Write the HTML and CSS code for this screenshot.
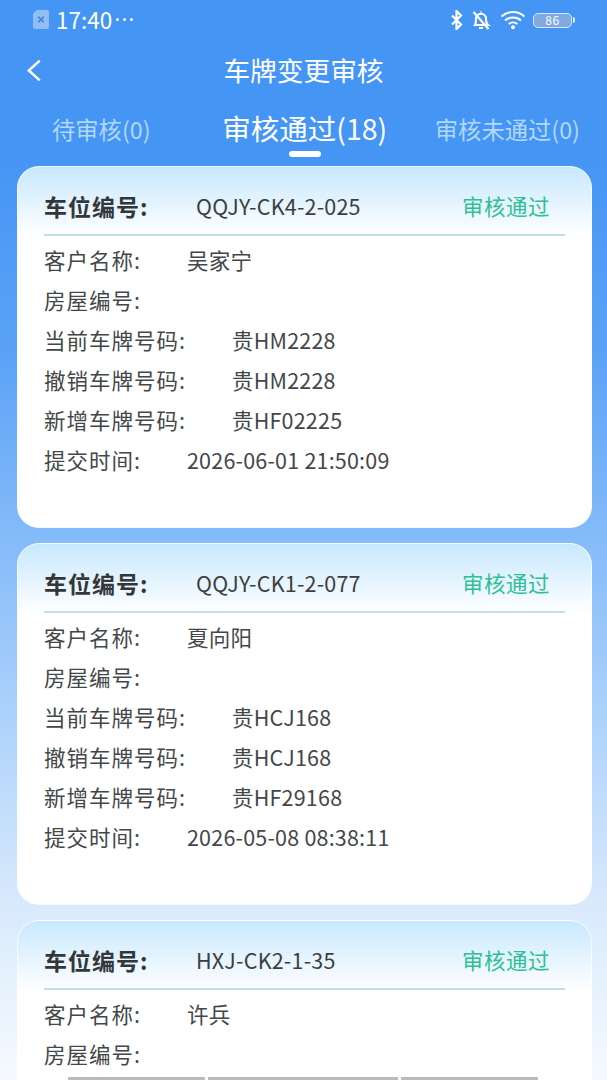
FILE: index.html
```html
<!DOCTYPE html>
<html lang="zh-CN">
<head>
<meta charset="utf-8">
<title>车牌变更审核</title>
<link rel="stylesheet" href="styles.css">
</head>
<body>
<div class="screen">
  <div class="status">
    <div class="status-left">
      <svg class="sim" viewBox="0 0 17 20"><path d="M4 0h11a2 2 0 0 1 2 2v16a2 2 0 0 1-2 2H2a2 2 0 0 1-2-2V4z" fill="#8fbff6"/><path d="M5.500 7l6 6M11.500 7l-6 6" stroke="#4a86d8" stroke-width="1.800" fill="none"/></svg>
      <span class="clock">17:40</span>
      <span class="dots"><i></i><i></i><i></i></span>
    </div>
    <div class="status-right">
      <svg class="ic-bt" viewBox="0 0 14 20"><path d="M2 5.500l9 9-4.500 4.500V1l4.500 4.500-9 9" fill="none" stroke="#fff" stroke-width="2.200"/></svg>
      <svg class="ic-bell" viewBox="0 0 20 20"><path d="M4 15c1-1.500 1-3.500 1-6 0-3 2.200-5.200 5-5.200s5 2.200 5 5.200c0 2.500 0 4.500 2 6zM8 18h4M9.500 2h1" fill="none" stroke="#fff" stroke-width="2.100"/><path d="M2.500 2l15 17" stroke="#fff" stroke-width="2.100"/></svg>
      <svg class="ic-wifi" viewBox="0 0 26 20"><path d="M1.500 6.500c6.500-6 16.500-6 23 0M5 10.500c4.500-4 11.500-4 16 0M8.700 14c2.500-2 6.100-2 8.600 0" fill="none" stroke="#fff" stroke-width="2"/><circle cx="13" cy="17.200" r="2" fill="#fff"/></svg>
      <div class="battery"><span class="battery-body">86</span><span class="battery-tip"></span></div>
    </div>
  </div>

  <div class="nav">
    <svg class="back" viewBox="0 0 16 24"><path d="M13.500 2.500L3 12l10.500 9.500" fill="none" stroke="#fff" stroke-width="2.400"/></svg>
    <h1 class="title">车牌变更审核</h1>
  </div>

  <div class="tabs">
    <div class="tab">待审核(0)</div>
    <div class="tab tab-active">审核通过(18)<span class="tab-bar"></span></div>
    <div class="tab">审核未通过(0)</div>
  </div>

  <div class="list">
    <section class="card">
      <header class="card-head">
        <span class="code-label">车位编号:</span>
        <span class="code-value">QQJY-CK4-2-025</span>
        <span class="state">审核通过</span>
      </header>
      <div class="rows">
        <div class="row"><span class="key">客户名称:</span><span>吴家宁</span></div>
        <div class="row"><span class="key">房屋编号:</span></div>
        <div class="row"><span class="key">当前车牌号码:</span><span>贵HM2228</span></div>
        <div class="row"><span class="key">撤销车牌号码:</span><span>贵HM2228</span></div>
        <div class="row"><span class="key">新增车牌号码:</span><span>贵HF02225</span></div>
        <div class="row"><span class="key">提交时间:</span><span>2026-06-01 21:50:09</span></div>
      </div>
    </section>
    <section class="card">
      <header class="card-head">
        <span class="code-label">车位编号:</span>
        <span class="code-value">QQJY-CK1-2-077</span>
        <span class="state">审核通过</span>
      </header>
      <div class="rows">
        <div class="row"><span class="key">客户名称:</span><span>夏向阳</span></div>
        <div class="row"><span class="key">房屋编号:</span></div>
        <div class="row"><span class="key">当前车牌号码:</span><span>贵HCJ168</span></div>
        <div class="row"><span class="key">撤销车牌号码:</span><span>贵HCJ168</span></div>
        <div class="row"><span class="key">新增车牌号码:</span><span>贵HF29168</span></div>
        <div class="row"><span class="key">提交时间:</span><span>2026-05-08 08:38:11</span></div>
      </div>
    </section>
    <section class="card">
      <header class="card-head">
        <span class="code-label">车位编号:</span>
        <span class="code-value">HXJ-CK2-1-35</span>
        <span class="state">审核通过</span>
      </header>
      <div class="rows">
        <div class="row"><span class="key">客户名称:</span><span>许兵</span></div>
        <div class="row"><span class="key">房屋编号:</span></div>
      </div>
    </section>
  </div>

  <div class="gesture"><span class="seg-a"></span><span class="seg-b"></span><span class="seg-a"></span></div>
</div>
</body>
</html>
```

FILE: styles.css
```css
* { box-sizing: border-box; margin: 0; padding: 0; }
html, body { width: 607px; height: 1080px; overflow: hidden; }
body {
  font-family: "Noto Sans CJK SC", "Noto Sans", sans-serif;
  color: #44474a;
}
.screen {
  position: relative;
  width: 607px;
  height: 1080px;
  overflow: hidden;
  background: linear-gradient(180deg, #4595f5 0, #4595f5 150px, #5aa2f7 350px, #7cb6f9 500px, #a8d0fb 700px, #d8e9fc 900px, #f6fafe 1080px);
}
.status {
  height: 38px;
  padding: 0 32px 0 33px;
  display: flex;
  align-items: center;
  justify-content: space-between;
  color: #fff;
}
.status-left { display: flex; align-items: center; }
.sim { width: 16px; height: 19px; }
.clock { margin-left: 7px; font-size: 22.500px; line-height: 24px; }
.dots { display: flex; gap: 4px; margin-left: 4px; }
.dots i { width: 3px; height: 3px; border-radius: 50%; background: #fff; }
.status-right { display: flex; align-items: center; margin-top: 2px; }
.ic-bt { width: 14px; height: 20px; }
.ic-bell { width: 20px; height: 20px; margin-left: 7px; }
.ic-wifi { width: 26px; height: 20px; margin-left: 9px; }
.battery { display: flex; align-items: center; margin-left: 7px; }
.battery-body {
  width: 39px;
  height: 15px;
  border: 1.500px solid #d6e7fc;
  border-radius: 5px;
  background: #7fa9e0;
  color: #fff;
  font-size: 12px;
  line-height: 12px;
  text-align: center;
  letter-spacing: .5px;
}
.battery-tip { width: 2px; height: 6px; margin-left: 1px; background: #dcebfd; border-radius: 0 2px 2px 0; }

.nav {
  position: relative;
  height: 63px;
  display: flex;
  align-items: center;
  justify-content: center;
}
.back { position: absolute; left: 25px; top: 20px; width: 18px; height: 25px; }
.title {
  font-size: 26.700px;
  font-weight: 400;
  color: #fff;
  line-height: 30px;
}
.tabs {
  height: 65px;
  padding: 8px 27px 0 52px;
  display: flex;
  align-items: flex-start;
  justify-content: space-between;
  color: #b2d8fb;
  font-size: 23.300px;
  line-height: 40px;
}
.tab { position: relative; white-space: nowrap; }
.tab-active { color: #fff; font-size: 28.500px; margin: -1px 0 0 24px; }
.tab-bar {
  position: absolute;
  left: 50%;
  top: 43px;
  width: 32px;
  height: 6px;
  margin-left: -16px;
  border-radius: 3px;
  background: #fff;
}
.list {
  padding: 0 15px 0 17px;
  display: flex;
  flex-direction: column;
  gap: 15px;
}
.card {
  flex: none;
  height: 362px;
  border-radius: 22px;
  border: 1.500px solid rgba(255, 255, 255, .75);
  background: linear-gradient(180deg, #c8e8fe 0, #ffffff 70px, #ffffff 100%);
  padding: 0 26px;
}
.card-head {
  height: 69px;
  display: flex;
  align-items: center;
  border-bottom: 2px solid #bfe0ea;
  padding: 10px 15px 0 0;
}
.code-label { font-size: 23px; font-weight: 700; width: 152px; white-space: nowrap; color: #33373a; letter-spacing: 1px; }
.code-value { font-size: 21.500px; flex: 1; letter-spacing: .2px; color: #3c3f42; }
.state { font-size: 21.500px; color: #2fbf97; letter-spacing: .5px; }
.rows { padding-top: 3px; }
.row {
  height: 40px;
  display: flex;
  align-items: center;
  gap: 46px;
  font-size: 21.500px;
  letter-spacing: .2px;
  white-space: nowrap;
}
.key { letter-spacing: 1px; }
.gesture {
  position: absolute;
  left: 68px;
  bottom: 0;
  display: flex;
  gap: 3px;
}
.gesture span { height: 3px; background: #bbbbbb; }
.seg-a { width: 137px; }
.seg-b { width: 190px; }
```
